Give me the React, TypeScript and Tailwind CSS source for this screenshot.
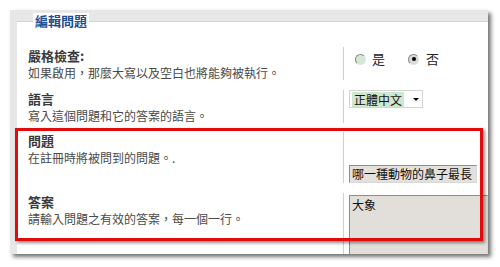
import React from "react";

function Radio({ checked }: { checked?: boolean }) {
  return (
    <span
      className={`flex size-[11px] items-center justify-center rounded-full border border-t-[#8a8a8a] border-l-[#8a8a8a] border-r-[#e2e2e2] border-b-[#e2e2e2] ${
        checked ? "bg-[#d6dbd6]" : "bg-[#d3e8d3]"
      }`}
    >
      {checked && <span className="size-[4px] rounded-full bg-black" />}
    </span>
  );
}

function Label({ title, desc }: { title: string; desc: string }) {
  return (
    <div className="pl-[11px] pt-[1px]">
      <div className="text-[13px] leading-[16px] font-bold text-[#3a3a3a]">{title}</div>
      <div className="mt-[1px] text-[12px] leading-[15px] text-[#4a4a4a]">{desc}</div>
    </div>
  );
}

export default function App() {
  return (
    <div className="relative h-[267px] w-[500px] overflow-hidden bg-white pt-[10px] pl-[10px] font-['Noto_Sans_CJK_TC',sans-serif]">
      <div className="relative h-[244px] w-[478px] border-t-[11px] border-l-[7px] border-[#e7e7e7] bg-white shadow-[3px_3px_4px_rgba(0,0,0,0.55)]">
        <div className="h-full overflow-hidden border-t border-[#d2d2d2] pt-[25px]">
          <div className="flex flex-col gap-[10px]">
            {/* row 1 */}
            <div className="grid h-[33px] grid-cols-[326px_1fr]">
              <Label title="嚴格檢查:" desc="如果啟用，那麼大寫以及空白也將能夠被執行。" />
              <div className="border-l border-[#cfcfcf] pl-[11px] pt-[5px]">
                <div className="flex items-center text-[13px] leading-[14px] text-[#222]">
                  <Radio />
                  <span className="ml-[6px]">是</span>
                  <span className="ml-[23px]">
                    <Radio checked />
                  </span>
                  <span className="ml-[7px]">否</span>
                </div>
              </div>
            </div>
            {/* row 2 */}
            <div className="grid h-[32px] grid-cols-[326px_1fr]">
              <Label title="語言" desc="寫入這個問題和它的答案的語言。" />
              <div className="border-l border-[#cfcfcf] pl-[5px]">
                <div className="flex h-[18px] w-[74px] items-center border border-[#d4d4d4] bg-white pl-[2px]">
                  <span className="bg-[#cfe7cf] px-[2px] text-[12px] leading-[15px] text-[#111]">正體中文</span>
                  <span className="ml-[9px] h-0 w-0 border-x-[3px] border-t-[3px] border-x-transparent border-t-black" />
                </div>
              </div>
            </div>
            {/* row 3 */}
            <div className="grid h-[51px] grid-cols-[326px_1fr]">
              <Label title="問題" desc="在註冊時將被問到的問題。." />
              <div className="border-l border-[#cfcfcf] pl-[5px] pt-[33px]">
                <div className="flex h-[18px] w-[128px] items-center border border-t-[#8c8c8c] border-l-[#8c8c8c] border-r-[#d8d8d8] border-b-[#d8d8d8] bg-[#e4e1dc] pl-[2px] text-[12px] leading-[14px] text-[#111]">
                  哪一種動物的鼻子最長
                </div>
              </div>
            </div>
            {/* row 4 */}
            <div className="grid h-[62px] grid-cols-[326px_1fr]">
              <Label title="答案" desc="請輸入問題之有效的答案，每一個一行。" />
              <div className="border-l border-[#cfcfcf] pl-[5px] pt-[2px]">
                <div className="h-[62px] border border-t-[#8c8c8c] border-l-[#8c8c8c] border-r-[#d8d8d8] border-b-[#d8d8d8] bg-[#e2dfda] pl-[2px] pt-[2px] text-[12px] leading-[14px] text-[#111]">
                  大象
                </div>
              </div>
            </div>
          </div>
        </div>
        <span className="absolute left-[16px] top-[-8px] bg-white px-[2px] text-[13px] leading-[16px] font-bold text-[#1d4f93]">
          編輯問題
        </span>
      </div>
      <div className="absolute left-[15px] top-[128px] h-[113px] w-[468px] border-[3px] border-[#e20b0b] shadow-[2px_2px_3px_rgba(0,0,0,0.45)]" />
    </div>
  );
}
